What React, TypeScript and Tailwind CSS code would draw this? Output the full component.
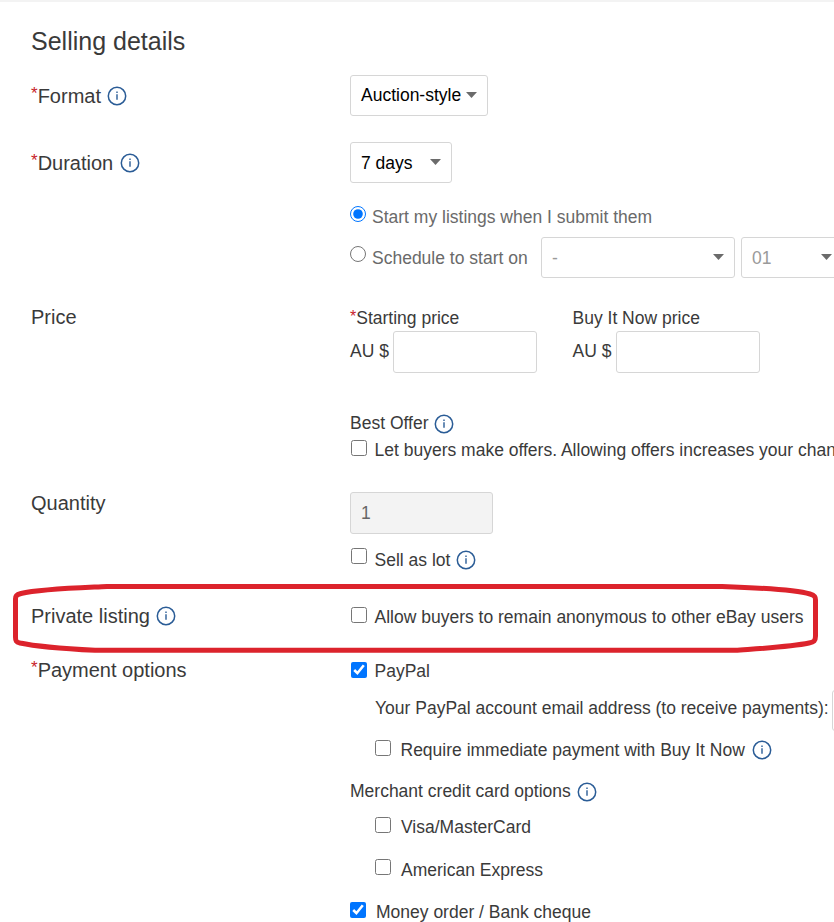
import React, { useState } from "react";

const InfoIcon = ({ className = "" }: { className?: string }) => (
  <svg className={"h-5 w-5 shrink-0 " + className} viewBox="0 0 20 20" fill="none">
    <circle cx="10" cy="10" r="8.7" stroke="#2a5c96" strokeWidth="1.5" />
    <path d="M10 8.2V13.8" stroke="#2a5c96" strokeWidth="1.4" />
    <path d="M10 5.4V6.9" stroke="#2a5c96" strokeWidth="1.4" />
  </svg>
)

const Select = ({ value, className = "", textClass = "text-black" }: { value: string; className?: string; textClass?: string }) => (
  <button type="button" className={"flex h-[41px] shrink-0 items-center justify-between rounded-[3px] border border-[#d6d6d6] bg-white pl-[10px] pr-[10px] " + className}>
    <span className={textClass}>{value}</span>
    <svg className="mb-px h-[6px] w-[11px] shrink-0" viewBox="0 0 11 6">
      <path d="M0 0H11L5.5 6Z" fill="#6b6b6b" />
    </svg>
  </button>
)

type CheckProps = { label: string; className?: string; boxClass?: string; gap?: string; defaultChecked?: boolean; info?: boolean }

const Check = ({ label, className = "", boxClass = "", gap = "gap-[7.5px]", defaultChecked = false, info = false }: CheckProps) => {
  const [checked, setChecked] = useState(defaultChecked)
  return (
    <label className={"flex h-5 items-center " + gap + " " + className}>
      <input type="checkbox" className={"h-4 w-4 shrink-0 accent-[#0075ff] " + boxClass} checked={checked} onChange={() => setChecked(!checked)} />
      <span>{label}</span>
      {info && <InfoIcon className="-ml-[2px] mb-px" />}
    </label>
  )
}

const Row = ({ label, required = false, info = false, className = "", labelClass = "", children }: { label: string; required?: boolean; info?: boolean; className?: string; labelClass?: string; children: React.ReactNode }) => (
  <section className={"flex " + className}>
    <div className={"flex h-6 w-[319px] shrink-0 items-center self-start text-[20px] leading-6 " + labelClass}>
      {required && <span className="mb-[5px] text-[17px] text-[#c8232c]">*</span>}
      <span>{label}</span>
      {info && <InfoIcon className="mb-px ml-[6.5px]" />}
    </div>
    <div className="flex shrink-0 flex-col items-start">{children}</div>
  </section>
)

export default function App() {
  const [start, setStart] = useState("now")

  return (
    <main className="relative h-[922px] w-full overflow-hidden whitespace-nowrap border-t-2 border-[#f3f3f3] bg-white pl-[31px] font-['Liberation_Sans',Arial,sans-serif] text-[17.5px] leading-5 text-[#3a3a3a]">
      <h1 className="h-[73px] pt-[24px] text-[25px] leading-[30px]">Selling details</h1>

      <Row label="Format" required info className="h-[67px]" labelClass="mt-[9px]">
        <Select value="Auction-style" className="w-[138px]" textClass="mb-[2px] text-black" />
      </Row>

      <Row label="Duration" required info className="h-[163px]" labelClass="mt-[9px]">
        <Select value="7 days" className="w-[102px]" />
        <label className="mt-[24px] flex h-5 items-center gap-[6px] text-[#6a6a6a]">
          <input type="radio" name="start" className="mb-[6px] h-4 w-4 accent-[#0075ff]" checked={start === "now"} onChange={() => setStart("now")} />
          <span>Start my listings when I submit them</span>
        </label>
        <div className="mt-[10px] flex items-center">
          <label className="flex h-5 w-[191px] items-center gap-[6px] text-[#6a6a6a]">
            <input type="radio" name="start" className="mb-[7px] h-4 w-4 accent-[#0075ff]" checked={start === "later"} onChange={() => setStart("later")} />
            <span>Schedule to start on</span>
          </label>
          <Select value="-" className="w-[194px]" textClass="text-[#9a9a9a]" />
          <Select value="01" className="ml-[6px] w-[102px]" textClass="text-[#9a9a9a]" />
        </div>
      </Row>

      <Row label="Price" className="h-[187px]">
        <div className="mt-[3px] flex">
          <div className="w-[222.5px]">
            <div className="flex h-[23px]">
              <span className="-mt-px text-[16px] text-[#c8232c]">*</span>
              <span>Starting price</span>
            </div>
            <label className="flex gap-[4px]">
              <span className="mt-[10px]">AU $</span>
              <input type="text" className="h-[42px] w-[144px] rounded-[3px] border border-[#d6d6d6] px-[10px]" />
            </label>
          </div>
          <div>
            <div className="h-[23px]">Buy It Now price</div>
            <label className="flex gap-[4.5px]">
              <span className="mt-[10px]">AU $</span>
              <input type="text" className="h-[42px] w-[144px] rounded-[3px] border border-[#d6d6d6] px-[10px]" />
            </label>
          </div>
        </div>
        <div className="mt-[40px] flex h-5 items-center">
          <span>Best Offer</span>
          <InfoIcon className="ml-[6px] mt-[2px]" />
        </div>
        <Check label="Let buyers make offers. Allowing offers increases your chances" className="ml-[1px] mt-[7px]" boxClass="mb-[4px]" />
      </Row>

      <Row label="Quantity" className="h-[112px]" labelClass="-mt-[1px]">
        <input type="text" disabled defaultValue="1" className="h-[42px] w-[143px] rounded-[3px] border border-[#d6d6d6] bg-[#f3f3f3] px-[10px] text-[#666]" />
        <Check label="Sell as lot" className="ml-[1px] mt-[16px]" boxClass="mb-[8px]" info />
      </Row>

      <Row label="Private listing" info className="h-[54px]">
        <Check label="Allow buyers to remain anonymous to other eBay users" className="ml-[1px] mt-[3px]" boxClass="mb-[4px]" />
      </Row>

      <Row label="Payment options" required>
        <Check label="PayPal" className="ml-[1px] mt-[3px]" boxClass="mb-[2px]" defaultChecked />
        <div className="ml-[25px] mt-[9px] flex h-[41px] items-center">
          <label className="mb-[5px] w-[457px]">Your PayPal account email address (to receive payments):</label>
          <input type="text" className="h-[41px] w-[200px] rounded-[3px] border border-[#d6d6d6]" />
        </div>
        <Check label="Require immediate payment with Buy It Now" className="ml-[25px] mt-[9px]" boxClass="mb-[4px]" gap="gap-[9.5px]" info />
        <div className="mt-[21px] flex h-5 items-center">
          <span>Merchant credit card options</span>
          <InfoIcon className="ml-[6.5px] mt-[2px]" />
        </div>
        <Check label="Visa/MasterCard" className="ml-[25px] mt-[16px]" boxClass="mb-[4px]" gap="gap-[10px]" />
        <Check label="American Express" className="ml-[25px] mt-[23px]" boxClass="mb-[6px]" gap="gap-[10px]" />
        <Check label="Money order / Bank cheque" className="mt-[22px]" boxClass="mb-[4px]" gap="gap-[10px]" defaultChecked />
      </Row>

      {/* hand drawn marker around private listing */}
      <svg className="pointer-events-none absolute left-0 top-[578px] h-[80px] w-[834px]" viewBox="0 580 834 80" fill="none">
        <path d="M107 586.5H722C765 588 796 590 810 594C815 595.5 815.5 597 815.5 600V636C815.5 641 814 642 809 643C790 647 760 648.5 735 650.3H95C60 648.5 34 646 20 643C16 642 15.5 641 15.5 637V599C15.5 596 16 595 21 593.5C40 589 75 588 107 586.5Z" stroke="#dc232c" strokeWidth="5" />
      </svg>
    </main>
  )
}
